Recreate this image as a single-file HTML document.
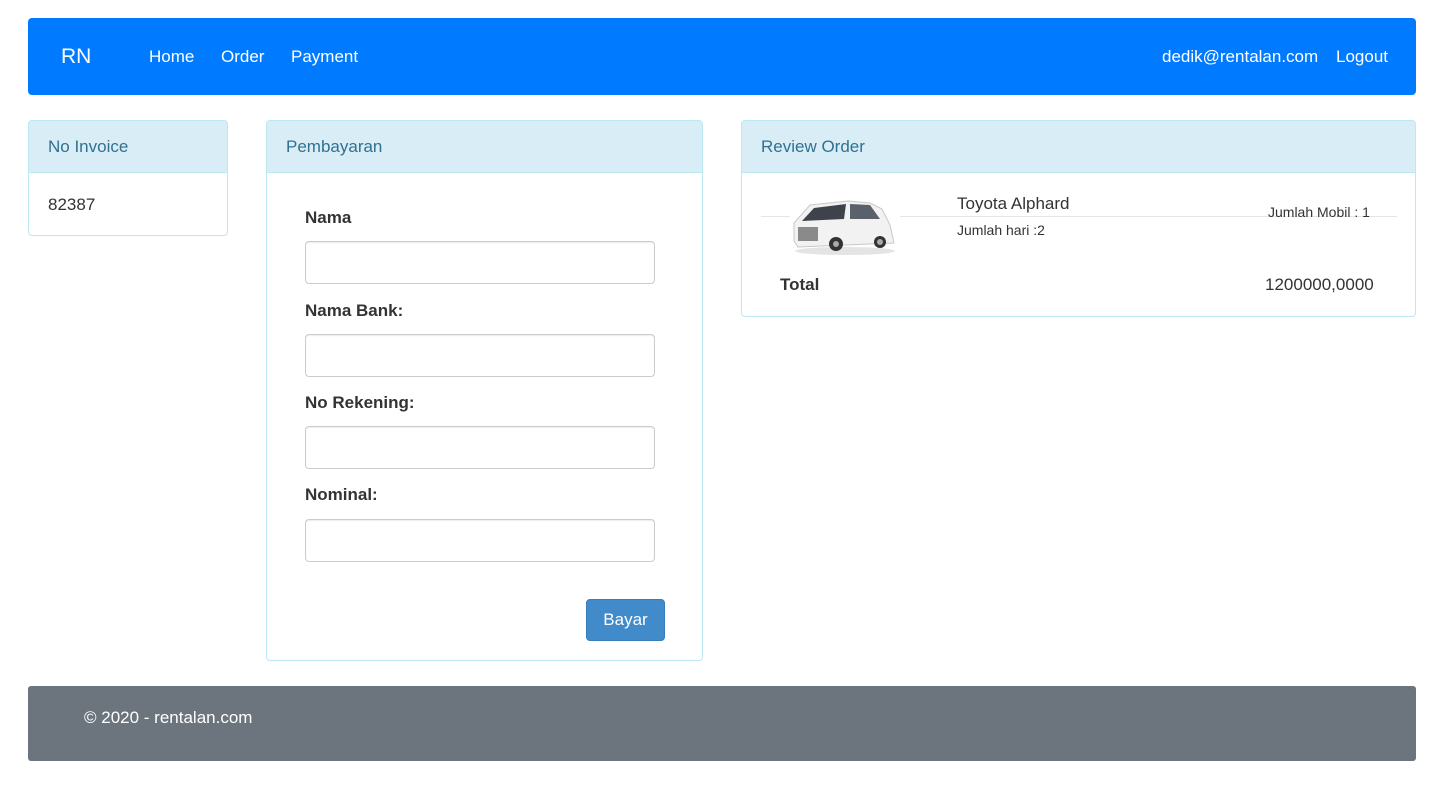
<!DOCTYPE html>
<html><head><style>
*{box-sizing:border-box;margin:0;padding:0}
body{width:1438px;height:785px;background:#fff;font-family:"Liberation Sans",sans-serif;color:#333;position:relative;overflow:hidden}
.a{position:absolute}
.nav{left:28px;top:18px;width:1388px;height:77px;background:#007bff;border-radius:4px;color:#fff}
.panel{border:1px solid #bce8f1;border-radius:4px;background:#fff}
.ph{position:absolute;left:0;top:0;right:0;height:52px;background:#d9edf7;border-bottom:1px solid #bce8f1;color:#31708f;font-size:17px;padding:16px 0 0 19px;border-radius:3px 3px 0 0}
.lbl{font-size:17px;font-weight:bold;color:#333}
.inp{width:350px;height:43px;border:1px solid #ccc;border-radius:4px;box-shadow:inset 0 1px 1px rgba(0,0,0,.075)}
</style></head><body>
<div class="a nav">
<div class="a" style="left:33px;top:27px;font-size:21px">RN</div>
<div class="a" style="left:121px;top:29px;font-size:17px">Home</div>
<div class="a" style="left:193px;top:29px;font-size:17px">Order</div>
<div class="a" style="left:263px;top:29px;font-size:17px">Payment</div>
<div class="a" style="left:1134px;top:29px;font-size:17px">dedik@rentalan.com</div>
<div class="a" style="left:1308px;top:29px;font-size:17px">Logout</div>
</div>

<div class="a panel" style="left:28px;top:120px;width:200px;height:116px">
<div class="ph">No Invoice</div>
<div class="a" style="left:19px;top:74px;font-size:17px">82387</div>
</div>

<div class="a panel" style="left:266px;top:120px;width:437px;height:541px">
<div class="ph">Pembayaran</div>
<div class="a lbl" style="left:38px;top:87px">Nama</div>
<div class="a inp" style="left:38px;top:120px"></div>
<div class="a lbl" style="left:38px;top:180px">Nama Bank:</div>
<div class="a inp" style="left:38px;top:213px"></div>
<div class="a lbl" style="left:38px;top:272px">No Rekening:</div>
<div class="a inp" style="left:38px;top:305px"></div>
<div class="a lbl" style="left:38px;top:364px">Nominal:</div>
<div class="a inp" style="left:38px;top:398px"></div>
<div class="a" style="left:319px;top:478px;width:79px;height:42px;background:#428bca;border:1px solid #357ebd;border-radius:4px;color:#fff;font-size:17px;text-align:center;line-height:40px">Bayar</div>
</div>

<div class="a panel" style="left:741px;top:120px;width:675px;height:197px">
<div class="ph">Review Order</div>
<div class="a" style="left:19px;top:95px;width:636px;height:1px;background:#e5e5e5"></div>
<svg class="a" style="left:48px;top:76px" width="110" height="58" viewBox="0 0 110 58">
<rect x="0" y="0" width="110" height="58" fill="#fff"/>
<ellipse cx="55" cy="54" rx="50" ry="4" fill="#e4e4e4"/>
<path d="M4 44 L4 26 L20 8 L58 4 L80 6 L92 12 L100 28 L104 46 L8 50Z" fill="#f2f2f2" stroke="#c8c8c8"/>
<path d="M12 24 L24 11 L56 7 L54 22Z" fill="#3e434b"/>
<path d="M60 7 L80 8 L90 22 L60 22Z" fill="#5b616a"/>
<rect x="8" y="30" width="20" height="14" fill="#8a8a8a"/>
<circle cx="46" cy="47" r="7" fill="#333"/><circle cx="90" cy="45" r="6" fill="#333"/>
<circle cx="46" cy="47" r="3" fill="#aaa"/><circle cx="90" cy="45" r="3" fill="#aaa"/>
</svg>
<div class="a" style="left:215px;top:73px;font-size:17px">Toyota Alphard</div>
<div class="a" style="left:215px;top:101px;font-size:14px">Jumlah hari :2</div>
<div class="a" style="left:526px;top:83px;font-size:14px">Jumlah Mobil : 1</div>
<div class="a" style="left:38px;top:154px;font-size:17px;font-weight:bold">Total</div>
<div class="a" style="left:523px;top:154px;font-size:17px">1200000,0000</div>
</div>

<div class="a" style="left:28px;top:686px;width:1388px;height:75px;background:#6c757d;border-radius:3px;color:#fff;font-size:17px;padding:22px 0 0 56px">© 2020 - rentalan.com</div>
</body></html>
